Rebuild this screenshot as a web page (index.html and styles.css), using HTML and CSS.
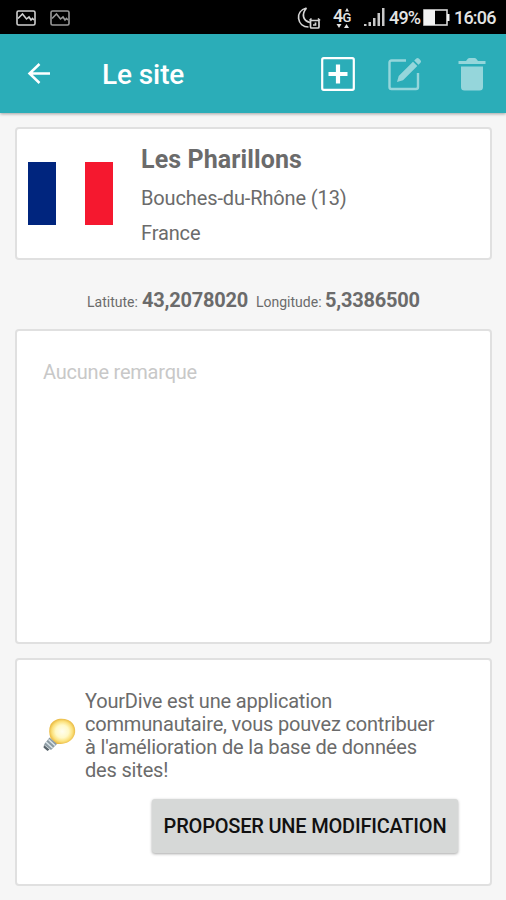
FILE: index.html
```html
<!DOCTYPE html>
<html lang="fr">
<head>
    <meta charset="UTF-8">
    <meta name="viewport" content="width=device-width, initial-scale=1.0">
    <title>Le site</title>
    <link rel="stylesheet" href="styles.css">
</head>
<body>
    <div class="status-bar">
        <div class="notifications">
            <svg width="20" height="16" viewBox="0 0 20 16">
                <rect x="1" y="1" width="18" height="14" rx="1.5"/>
                <path d="M2 8.5L6.5 4l4 5 2.5-2 2 3 1.5-1.5L18 10"/>
            </svg>
            <svg class="dim" width="20" height="16" viewBox="0 0 20 16">
                <rect x="1" y="1" width="18" height="14" rx="1.5"/>
                <path d="M2 8.5L6.5 4l4 5 2.5-2 2 3 1.5-1.5L18 10"/>
            </svg>
        </div>
        <div class="system">
            <svg class="moon" width="24" height="24" viewBox="0 0 24 24">
                <path d="M9.5 2C3.5 3.5 1 8 1.6 12.5 2.3 17.5 6 21 11.5 21M9.5 2C4.5 8 5.5 14.500 13 16.500"/>
                <rect x="13.5" y="14.5" width="8.5" height="7.5" rx="1"/>
                <path d="M12.5 14.5l2-2M23 14.5l-2-2M18.5 16.5V19H16"/>
            </svg>
            <svg class="network" width="22" height="32" viewBox="0 -5 22 32">
                <text x="0" y="15" font-size="18">4</text>
                <text x="9.5" y="15" font-size="13">G</text>
                <path d="M3.5 17h5L6 21zM11 21h5l-2.500-4zM12 4.500h4L14 1z"/>
            </svg>
            <svg class="signal" width="21" height="19" viewBox="0 0 21 19">
                <path d="M0 16h2.5v2H0zM4.5 14H7v4H4.500zM9 10h2.500v8H9zM13.500 5H16v13h-2.500zM18 0h2.500v18H18z"/>
            </svg>
            <span class="percent">49%</span>
            <svg class="battery" width="27" height="17" viewBox="0 0 27 17">
                <rect x="1" y="1" width="23" height="15"/>
                <path d="M1 1h11v15H1zM24 5h2.5v7H24z"/>
            </svg>
            <span class="time">16:06</span>
        </div>
    </div>

    <header>
        <svg class="back" width="24" height="24" viewBox="0 0 24 24">
            <path d="M12.5 2L2.5 11.5 12.5 21M2.5 11.5H23"/>
        </svg>
        <h1>Le site</h1>
        <div class="actions">
            <svg width="34" height="34" viewBox="0 0 34 34">
                <rect x="1.2" y="1.2" width="31.6" height="31.6" rx="1.5" fill="none" stroke="#fff" stroke-width="2.2"/>
                <path d="M17 7.5v19M7.5 17h19" fill="none" stroke="#fff" stroke-width="4.2"/>
            </svg>
            <svg class="disabled" width="34" height="34" viewBox="0 0 34 34">
                <path d="M18 3.5H3.5Q1.5 3.5 1.5 5.5v24.5Q1.5 32 3.5 32H28Q30 32 30 30V16" fill="none" stroke="#fff" stroke-width="2.4"/>
                <path d="M9 25l1.7-6L25 4.7l4.3 4.3L15 23.3zM26.2 3.5L28.3 1.5q1.2-1.2 2.500 0l1.700 1.700q1.200 1.200 0 2.500L30.500 7.800z" fill="#fff"/>
            </svg>
            <svg class="disabled" width="28" height="34" viewBox="0 0 28 34">
                <path d="M.5 4H8l2-2.5q.5-.5 1.5-.5h5q1 0 1.5.5L20 4h7.500v3H.5zM3 9.500h22V30q0 3.500-3.500 3.500h-15Q3 33.500 3 30z" fill="#fff"/>
            </svg>
        </div>
    </header>

    <main>
        <section class="card site">
            <div class="flag"></div>
            <div class="site-info">
                <h2>Les Pharillons</h2>
                <p>Bouches-du-Rhône (13)</p>
                <p>France</p>
            </div>
        </section>

        <div class="coords">
            <span class="lat">Latitute:</span>
            <b class="lat-value">43,2078020</b>
            <span class="lng">Longitude:</span>
            <b class="lng-value">5,3386500</b>
        </div>

        <section class="card remarks">
            <p>Aucune remarque</p>
        </section>

        <section class="card community">
            <div class="tip">
                <svg width="36" height="38" viewBox="0 0 36 38">
                    <defs>
                        <radialGradient id="glow">
                            <stop offset="0" stop-color="#fffef0"/>
                            <stop offset=".5" stop-color="#fff9c8"/>
                            <stop offset=".8" stop-color="#fbe07a"/>
                            <stop offset="1" stop-color="#eabb45"/>
                        </radialGradient>
                    </defs>
                    <path d="M8.5 21C7 17 6.5 12 8.5 7.5 12 1.5 20 .5 26 3c7 3 9 11 5.5 17C27.5 26.5 20 27.5 14 27z" fill="url(#glow)"/>
                    <path d="M7.5 20.5l7.5 6.5-6 6-7-5.5z" fill="#8c9ba3"/>
                    <path d="M6.5 22.5l6.5 6M4 25l6.5 6" stroke="#dce5ea" stroke-width="1.5"/>
                    <path d="M2 28l5.5 4.500-2 1.500-4-3.500z" fill="#58646b"/>
                </svg>
                <p>YourDive est une application<br>communautaire, vous pouvez contribuer<br>à l'amélioration de la base de données<br>des sites!</p>
            </div>
            <button>PROPOSER UNE MODIFICATION</button>
        </section>
    </main>
</body>
</html>
```
FILE: styles.css
```css
* {
    box-sizing: border-box;
}

body {
    font-family: Roboto, "Liberation Sans", sans-serif;
    margin: 0;
    background-color: #f6f6f6;
    color: #6b6b6b;
    height: 900px;
    overflow: hidden;
}

h1, h2, p {
    margin: 0;
    white-space: nowrap;
}

svg {
    display: block;
    flex: none;
}

.status-bar {
    display: flex;
    justify-content: space-between;
    align-items: center;
    height: 34px;
    padding: 1px 9px 0 16px;
    background-color: #000;
    color: #e4e4e4;
}

.notifications {
    display: flex;
    gap: 14px;
}

.notifications svg {
    fill: none;
    stroke: #d0d0d0;
    stroke-width: 1.6;
}

.notifications .dim {
    stroke: #999;
}

.system {
    display: flex;
    align-items: center;
    font-size: 18px;
    font-weight: 500;
    line-height: 33px;
    letter-spacing: -0.8px;
}

.moon {
    fill: none;
    stroke: #d5d5d5;
    stroke-width: 1.7;
    margin-right: 12px;
}

.network {
    fill: #e4e4e4;
    margin-right: 9px;
    letter-spacing: 0;
}

.signal {
    fill: #c8c8c8;
    margin-right: 4px;
}

.percent {
    width: 34px;
}

.battery {
    fill: #f2f2f2;
    margin-right: 4px;
}

.battery rect {
    fill: none;
    stroke: #d8d8d8;
    stroke-width: 1.6;
}

.time {
    width: 43px;
}

header {
    display: flex;
    align-items: center;
    height: 79px;
    padding: 0 20px 0 27px;
    background-color: #2badb8;
    color: #fff;
    box-shadow: 0 1px 3px rgba(0, 0, 0, 0.35);
}

.back {
    fill: none;
    stroke: #fff;
    stroke-width: 2.5;
}

h1 {
    margin-left: 51px;
    padding-top: 1px;
    font-size: 28px;
    font-weight: 500;
    letter-spacing: -0.1px;
}

.actions {
    display: flex;
    gap: 35px;
    margin-left: auto;
}

.actions .disabled {
    opacity: 0.5;
}

.actions svg:nth-child(2) {
    margin: 0 1px 0 -2px;
}

main {
    padding: 14px 14px 0 15px;
}

.card {
    background-color: #fff;
    border: 2px solid #e0e0e0;
    border-radius: 4px;
}

.site {
    display: flex;
    height: 133px;
    padding: 0 11px;
}

.flag {
    width: 85px;
    height: 63px;
    margin-top: 33px;
    background: linear-gradient(to right, #00257e 33.3%, #fff 33.3%, #fff 66.6%, #f5182f 66.6%);
}

.site-info {
    margin-left: 28px;
    padding-top: 13px;
    font-size: 20px;
    line-height: 35px;
    letter-spacing: -0.13px;
}

.site-info h2 {
    font-size: 25px;
    font-weight: 700;
    line-height: 36px;
    letter-spacing: 0.1px;
    margin-bottom: 3px;
}

.coords {
    display: flex;
    align-items: baseline;
    height: 69px;
    padding-left: 72px;
    font-size: 14px;
    line-height: 80px;
    white-space: nowrap;
}

.coords b {
    font-size: 20px;
    letter-spacing: -0.22px;
}

.lat {
    width: 55px;
}

.lat-value {
    width: 114px;
}

.lng {
    width: 69px;
}

.remarks {
    height: 315px;
    padding: 29px 26px;
    color: #c8c8c8;
    font-size: 20px;
    line-height: 24px;
    letter-spacing: -0.22px;
}

.community {
    height: 228px;
    margin-top: 14px;
    padding: 30px 32px 0 25px;
}

.tip {
    display: flex;
    align-items: center;
    font-size: 20px;
    line-height: 23px;
    letter-spacing: -0.18px;
}

.tip p {
    margin-left: 7px;
}

button {
    display: block;
    width: 306px;
    height: 54px;
    margin: 17px 0 0 auto;
    padding: 0;
    border: none;
    border-radius: 3px;
    background-color: #d6d8d7;
    box-shadow: 0 1px 3px rgba(0, 0, 0, 0.35);
    color: #111;
    font-family: inherit;
    font-size: 20px;
    font-weight: 500;
    letter-spacing: -0.2px;
    white-space: nowrap;
}
```
